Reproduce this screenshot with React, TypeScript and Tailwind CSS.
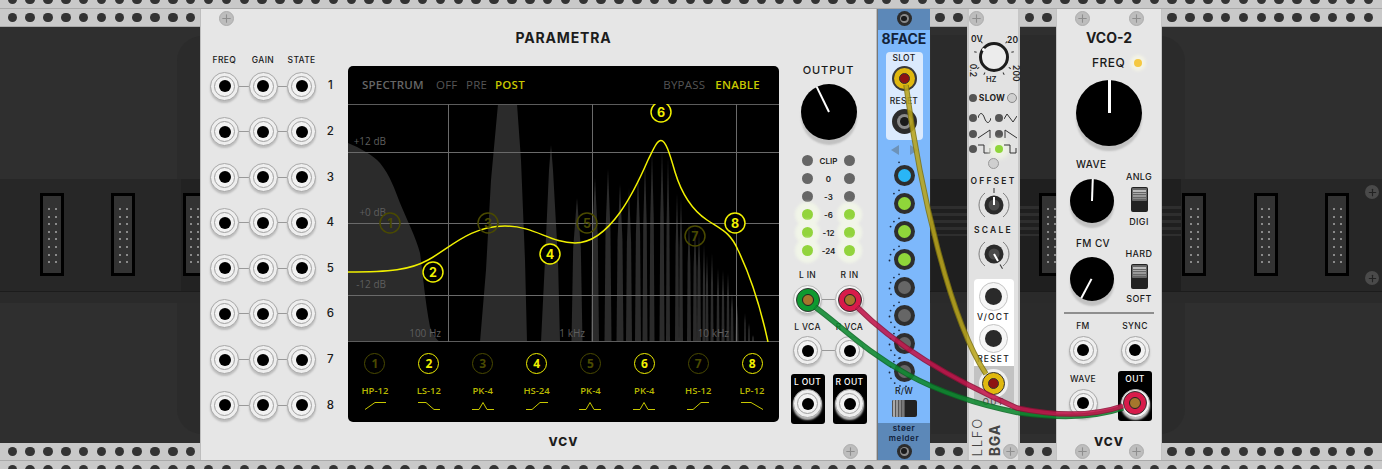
import React from 'react';
import { Plus } from 'lucide-react';

// harmonics of the spectrum: x, top y, half width
const spikes: [number, number, number][] = [
  [577, 198, 5.5], [595, 178, 4], [608, 169, 3.5], [620, 184, 3.5], [629, 188, 3], [638, 175, 3],
  [645, 162, 2.5], [652, 152, 2.5], [662, 150, 2.5], [668, 157, 2], [677, 193, 2], [681, 198, 2], [689, 222, 2],
  [695, 227, 2], [699, 233, 2], [704, 243, 1.5], [707, 255, 1.5], [712, 253, 1.5], [718, 268, 1.5], [723, 270, 1.5],
  [728, 273, 1.5], [732, 293, 1.5], [737, 305, 1.5], [745, 313, 1], [749, 323, 1], [753, 335, 1],
];

const bands = [
  { n: 1, on: false, label: 'HP-12', d: 'M1 8.5 L11 1.5 L22 1.5' },
  { n: 2, on: true, label: 'LS-12', d: 'M0 1.5 L8 1.5 L16 8.5 L22 8.5' },
  { n: 3, on: false, label: 'PK-4', d: 'M0 8.5 L7 8.5 L11 1.5 L15 8.5 L22 8.5' },
  { n: 4, on: true, label: 'HS-24', d: 'M0 8.5 L6 8.5 L14 1.5 L22 1.5' },
  { n: 5, on: false, label: 'PK-4', d: 'M0 8.5 L7 8.5 L11 1.5 L15 8.5 L22 8.5' },
  { n: 6, on: true, label: 'PK-4', d: 'M0 8.5 L7 8.5 L11 1.5 L15 8.5 L22 8.5' },
  { n: 7, on: false, label: 'HS-12', d: 'M0 8.5 L6 8.5 L14 1.5 L22 1.5' },
  { n: 8, on: true, label: 'LP-12', d: 'M0 1.5 L10 1.5 L22 8.5' },
];

const graphNodes = [
  { n: 1, x: 390, y: 223, on: false },
  { n: 2, x: 433, y: 272, on: true },
  { n: 3, x: 488, y: 223, on: false },
  { n: 4, x: 550, y: 254, on: true },
  { n: 5, x: 587, y: 223, on: false },
  { n: 6, x: 661, y: 112, on: true },
  { n: 7, x: 695, y: 236, on: false },
  { n: 8, x: 735, y: 223, on: true },
];

const meter = [
  { label: 'CLIP', on: false },
  { label: '0', on: false },
  { label: '-3', on: false },
  { label: '-6', on: true },
  { label: '-12', on: true },
  { label: '-24', on: true },
];

const eight = ['#29b6f6', '#8fd63a', '#8fd63a', '#8fd63a', '#666', '#666', '#666', '#666'];

function Rail({ className }: { className: string }) {
  return (
    <div className={`flex shrink-0 w-full pl-[7.55px] gap-[8.35px] bg-[#c9c9c9] overflow-hidden ${className}`}>
      {Array.from({ length: 78 }).map((_, i) => (
        <div key={i} className="w-[9.5px] h-[9.5px] shrink-0 rounded-full bg-[#333]" />
      ))}
    </div>
  );
}

function Connector() {
  return (
    <div className="w-[24px] h-[83px] shrink-0 border-[3px] border-black bg-[#333] grid grid-cols-2 content-start justify-items-center px-[2px] pt-[12px] gap-y-[5.6px]">
      {Array.from({ length: 16 }).map((_, i) => (
        <div key={i} className="w-[2px] h-[2px] bg-[#8a8a8a]" />
      ))}
    </div>
  );
}

function Screw({ className }: { className: string }) {
  return (
    <div className={`absolute w-[15px] h-[15px] rounded-full bg-[#bdbdbd] border border-[#adadad] flex items-center justify-center ${className}`}>
      <Plus size={13} strokeWidth={2} color="#8e8e8e" />
    </div>
  );
}

function Jack() {
  return (
    <div className="w-[29px] h-[29px] shrink-0 rounded-full border border-[#a8a8a8] bg-[#eeeeee] shadow-[0_2px_2px_#bcbcbc] flex items-center justify-center">
      <div className="w-[21px] h-[21px] rounded-full border border-[#a0a0a0] bg-[#f2f2f2] flex items-center justify-center">
        <div className="w-[12px] h-[12px] rounded-full bg-black" />
      </div>
    </div>
  );
}

function Plug({ ring, core }: { ring: string; core: string }) {
  return (
    <div className="w-[29px] h-[29px] shrink-0 rounded-full border border-[#b5b5b5] bg-[#f5f5f5] shadow-[0_2px_2px_#c4c4c4] flex items-center justify-center">
      <div className={`w-[24px] h-[24px] rounded-full border border-[#333] flex items-center justify-center ${ring}`}>
        <div className={`w-[12px] h-[12px] rounded-full border border-[#222] ${core}`} />
      </div>
    </div>
  );
}

function Knob({ size, needle }: { size: string; needle: string }) {
  return (
    <div className={`relative shrink-0 rounded-full bg-black shadow-[0_5px_2px_#c2c2c2] ${size}`}>
      <div className={`absolute left-1/2 top-0 bottom-1/2 -ml-px bg-white origin-bottom ${needle}`} />
    </div>
  );
}

function Led({ on }: { on: boolean }) {
  return on ? (
    <div className="w-[11px] h-[11px] shrink-0 rounded-full bg-[#92d43c] shadow-[0_0_3px_7px_#f1f5e8]" />
  ) : (
    <div className="w-[11px] h-[11px] shrink-0 rounded-full bg-[#666]" />
  );
}

function Label({ children, className = '' }: { children: React.ReactNode; className?: string }) {
  return (
    <div className={`h-[10px] flex items-center justify-center text-[8.5px] font-medium tracking-[0.04em] text-[#1a1a1a] whitespace-nowrap ${className}`}>
      {children}
    </div>
  );
}

function Logo() {
  return <div className="text-[12px] leading-[14px] font-extrabold tracking-[0.08em] text-[#1c1c1c] text-center">VCV</div>;
}

function Node({ n, on }: { n: number; on: boolean }) {
  return (
    <div
      className={`w-[21px] h-[21px] rounded-full border-[1.5px] flex items-center justify-center text-[12px] font-bold ${
        on ? 'border-[#f0f000] text-[#f0f000]' : 'border-[#4a4a00] text-[#4a4a00]'
      }`}
    >
      {n}
    </div>
  );
}

function Graph() {
  return (
    <svg viewBox="348 104 431 238" className="w-[431px] h-[238px] block shrink-0">
      <g fill="#2b2b2b">
        <path d="M348 143 C360 148 373 155 380 163 C390 175 395 190 400 203 C408 222 416 238 420 253 C423 275 425 300 430 327 C433 335 437 340 440 342 L348 342 Z" />
        <path d="M480 342 L486 270 L491 180 L498 104 L517 104 L521 160 L525 260 L527 342 Z" />
        <path d="M541 342 L545 260 L549 170 L551 145 L553 170 L558 260 L560 342 Z" />
        {spikes.map(([x, top, w]) => {
          const mid = top + (342 - top) * 0.35;
          return <path key={x} d={`M${x - w} 342 L${x - w * 0.7} ${mid} L${x} ${top} L${x + w * 0.7} ${mid} L${x + w} 342 Z`} />;
        })}
      </g>
      <g stroke="#5c5c5c" strokeWidth="1">
        <line x1="348" x2="779" y1="104.5" y2="104.5" />
        <line x1="348" x2="779" y1="152.5" y2="152.5" stroke="#6a6a6a" />
        <line x1="348" x2="779" y1="223.5" y2="223.5" stroke="#6a6a6a" />
        <line x1="348" x2="779" y1="295.5" y2="295.5" stroke="#6a6a6a" />
        <line x1="348" x2="779" y1="341.5" y2="341.5" />
        <line x1="448.5" x2="448.5" y1="104" y2="342" stroke="#6a6a6a" />
        <line x1="592.5" x2="592.5" y1="104" y2="342" stroke="#6a6a6a" />
        <line x1="736.5" x2="736.5" y1="104" y2="342" stroke="#6a6a6a" />
      </g>
      <g fontFamily="Open Sans, sans-serif" fontSize="10" fill="#5e5e5e" textAnchor="end">
        <text x="386" y="145">+12 dB</text>
        <text x="386" y="216">+0 dB</text>
        <text x="386" y="288">-12 dB</text>
        <text x="441" y="337">100 Hz</text>
        <text x="585" y="337">1 kHz</text>
        <text x="729" y="337">10 kHz</text>
      </g>
      <path
        d="M348 272 C390 272 410 270 428 260 C450 248 470 226 505 226 C535 226 550 243 575 243 C610 243 635 190 648 160 C654 148 657 140.5 661 140.5 C666 140.5 670 155 675 172 C682 195 692 210 707 220 C722 230 730 232 738 250 C750 275 760 305 768 342"
        fill="none"
        stroke="#f0f000"
        strokeWidth="1.5"
      />
      {graphNodes.map((g) => (
        <g key={g.n}>
          <circle cx={g.x} cy={g.y} r="10" fill={g.on ? '#000' : 'none'} stroke={g.on ? '#f0f000' : '#4a4a00'} strokeWidth="1.5" />
          <text x={g.x} y={g.y + 4.5} textAnchor="middle" fontFamily="Inter, sans-serif" fontSize="12.5" fontWeight="700" fill={g.on ? '#f0f000' : '#4a4a00'}>
            {g.n}
          </text>
        </g>
      ))}
    </svg>
  );
}

function Parametra() {
  return (
    <section className="relative w-[677px] h-full shrink-0 flex bg-[#e6e6e6] border-x border-[#bdbdbd]">
      <Screw className="left-[18px] top-[1.5px]" />
      <Screw className="right-[18px] bottom-[1.5px]" />

      {/* cv jacks */}
      <div className="w-[147px] shrink-0 pt-[46px]">
        <div className="flex pl-[4px] mb-[6.5px]">
          {['FREQ', 'GAIN', 'STATE'].map((t) => (
            <Label key={t} className="w-[38.65px]">{t}</Label>
          ))}
        </div>
        <div className="flex flex-col gap-[16.6px] pl-[9px]">
          {[1, 2, 3, 4, 5, 6, 7, 8].map((n) => (
            <div key={n} className="flex items-center">
              <Jack />
              <div className="w-[9.65px] h-px bg-[#999]" />
              <Jack />
              <div className="w-[9.65px] h-px bg-[#999]" />
              <Jack />
              <div className="ml-[7px] w-[14px] text-center text-[11.5px] font-medium text-[#1a1a1a]">{n}</div>
            </div>
          ))}
        </div>
      </div>

      {/* display */}
      <div className="w-[431px] shrink-0 flex flex-col">
        <div className="h-[57px] pb-px flex items-center justify-center text-[14px] font-bold tracking-[0.06em] text-[#1c1c1c]">PARAMETRA</div>
        <div className="h-[356px] rounded-[5px] bg-black overflow-hidden flex flex-col font-['Open_Sans',sans-serif]">
          <div className="h-[38px] shrink-0 flex items-center px-[14px] text-[11.5px] tracking-[0.02em] text-[#555]">
            <span className="w-[61px] font-semibold text-[#666] whitespace-nowrap">SPECTRUM</span>
            <span className="ml-[13px] w-[21px]">OFF</span>
            <span className="ml-[9px] w-[21px]">PRE</span>
            <span className="ml-[8px] font-semibold text-[#c8c800]">POST</span>
            <span className="ml-auto">BYPASS</span>
            <span className="ml-[10px] mr-[5px] font-semibold text-[#c8c800]">ENABLE</span>
          </div>
          <Graph />
          <div className="flex-1 grid grid-cols-8 pt-[11px]">
            {bands.map((b) => (
              <div key={b.n} className="flex flex-col items-center">
                <Node n={b.n} on={b.on} />
                <div className="mt-[10px] h-[14px] leading-[14px] text-[9.5px] font-semibold text-[#b8b800]">{b.label}</div>
                <svg width="22" height="10" viewBox="0 0 22 10" className="mt-[3px]">
                  <path d={b.d} fill="none" stroke="#c8c800" strokeWidth="1" />
                </svg>
              </div>
            ))}
          </div>
        </div>
        <div className="mt-[13px]">
          <Logo />
        </div>
      </div>

      {/* output */}
      <div className="w-[97px] shrink-0 pl-[2px] pt-[55px] flex flex-col items-center">
        <div className="h-[12px] flex items-center text-[11px] font-medium tracking-[0.08em] text-[#1a1a1a]">OUTPUT</div>
        <div className="mt-[8px]">
          <Knob size="w-[56px] h-[56px]" needle="w-[2px] rotate-[-26deg]" />
        </div>
        <div className="mt-[11.7px] w-[53px] flex flex-col">
          {meter.map((m) => (
            <div key={m.label} className="h-[18px] flex items-center">
              <Led on={m.on} />
              <div className="relative flex-1 text-center text-[8px] font-semibold text-[#222]">{m.label}</div>
              <Led on={m.on} />
            </div>
          ))}
        </div>
        <div className="mt-[11px] w-[84px] grid grid-cols-2">
          <Label>L IN</Label>
          <Label>R IN</Label>
        </div>
        <div className="mt-[4.8px] flex items-center">
          <Plug ring="bg-[#0f9a30]" core="bg-[#a6762c]" />
          <div className="w-[13px] h-px bg-[#999]" />
          <Plug ring="bg-[#d81b4a]" core="bg-[#a6762c]" />
        </div>
        <div className="mt-[7.5px] w-[84px] grid grid-cols-2">
          <Label>L VCA</Label>
          <Label>R VCA</Label>
        </div>
        <div className="mt-[4.5px] flex items-center">
          <Jack />
          <div className="w-[13px] h-px bg-[#999]" />
          <Jack />
        </div>
        <div className="mt-[8.5px] flex gap-[8px]">
          {['L OUT', 'R OUT'].map((t) => (
            <div key={t} className="w-[34px] h-[50px] rounded-[3px] bg-black flex flex-col items-center pt-[3px] gap-[2.5px]">
              <Label className="text-white">{t}</Label>
              <Jack />
            </div>
          ))}
        </div>
      </div>
    </section>
  );
}

function DarkJack({ size }: { size: string }) {
  return (
    <div className={`shrink-0 rounded-full bg-[#2c2c2c] flex items-center justify-center ${size}`}>
      <div className="w-[60%] h-[60%] rounded-full bg-[#8a8a8a] flex items-center justify-center">
        <div className="w-[60%] h-[60%] rounded-full bg-[#1a1a1a]" />
      </div>
    </div>
  );
}

function SlotButton({ color, index }: { color: string; index: number }) {
  return (
    <div className="relative w-[21px] h-[21px] shrink-0 rounded-full bg-[#2e2e2e] flex items-center justify-center">
      <div className="w-[13px] h-[13px] rounded-full" style={{ backgroundColor: color }} />
      <svg viewBox="-16 -16 32 32" className="absolute -left-[5.5px] -top-[5.5px] w-[32px] h-[32px]">
        {Array.from({ length: index + 1 }).map((_, i) => {
          const a = ((-20 - i * 24) * Math.PI) / 180;
          return <circle key={i} cx={Math.sin(a) * 14.5} cy={-Math.cos(a) * 14.5} r="0.9" fill="#1c2c44" />;
        })}
      </svg>
    </div>
  );
}

function EightFace() {
  return (
    <section className="w-[53px] h-full shrink-0 flex flex-col items-center bg-[#7db8fb] border-l border-[#777]">
      <div className="w-full h-[21px] shrink-0 bg-[#5c88b8] flex justify-center pt-[2px]">
        <DarkJack size="w-[15px] h-[15px]" />
      </div>
      <div className="h-[22px] pb-[6px] shrink-0 flex items-center text-[14px] font-bold text-[#14233a]">8FACE</div>
      <div className="w-[37px] h-[88px] shrink-0 rounded-[4px] bg-[#dbeafd] flex flex-col items-center pt-[1px]">
        <Label className="text-[7px]">SLOT</Label>
        <div className="mt-[3px] w-[25px] h-[25px] rounded-full bg-[#3a3a3a] flex items-center justify-center">
          <div className="w-[21px] h-[21px] rounded-full bg-[#e0b80f] flex items-center justify-center">
            <div className="w-[11px] h-[11px] rounded-full border border-[#333] bg-[#8e1212]" />
          </div>
        </div>
        <Label className="mt-[5px] text-[7px]">RESET</Label>
        <div className="mt-[3px]">
          <DarkJack size="w-[25px] h-[25px]" />
        </div>
      </div>
      <div className="mt-[4px] h-[11px] flex items-center gap-[11px]">
        <div className="w-0 h-0 border-y-[5px] border-y-transparent border-r-[8px] border-r-[#6d92b8]" />
        <div className="w-0 h-0 border-y-[5px] border-y-transparent border-l-[8px] border-l-[#6d92b8]" />
      </div>
      <div className="mt-[10px] flex flex-col gap-[7px]">
        {eight.map((c, i) => (
          <SlotButton key={i} color={c} index={i} />
        ))}
      </div>
      <Label className="mt-[4.5px] text-[7.5px]">R/W</Label>
      <div className="mt-[3px] w-[25px] h-[17px] shrink-0 rounded-[2px] bg-[#222] flex overflow-hidden">
        <div className="w-[13px] flex gap-px bg-[#555] px-px">
          <div className="w-[2px] bg-[#aaa]" />
          <div className="w-[2px] bg-[#999]" />
          <div className="w-[2px] bg-[#888]" />
          <div className="w-[2px] bg-[#777]" />
        </div>
      </div>
      <div className="mt-auto w-full h-[37px] bg-[#5c88b8] flex flex-col items-center">
        <div className="h-[10px] text-[8px] leading-[10px] font-semibold tracking-[0.07em] text-[#10203a]">støer</div>
        <div className="h-[10px] text-[8px] leading-[10px] font-semibold tracking-[0.07em] text-[#10203a]">melder</div>
        <div className="mt-[0.5px]">
          <DarkJack size="w-[15px] h-[15px]" />
        </div>
      </div>
    </section>
  );
}

function Wave({ d }: { d: string }) {
  return (
    <svg width="13" height="12" viewBox="0 0 13 12" className="shrink-0">
      <path d={d} fill="none" stroke="#333" strokeWidth="1" />
    </svg>
  );
}

function TinyLed({ green = false }: { green?: boolean }) {
  return green ? (
    <div className="w-[8px] h-[8px] shrink-0 rounded-full bg-[#8fd63a] shadow-[0_0_4px_6px_#eef2e4]" />
  ) : (
    <div className="w-[8px] h-[8px] shrink-0 rounded-full bg-[#555]" />
  );
}

function SmallKnob({ angle }: { angle: string }) {
  return (
    <svg width="36" height="36" viewBox="-18 -18 36 36" className="shrink-0">
      <path d="M-9 -12 A15 15 0 0 0 -9 12" fill="none" stroke="#666" strokeWidth="0.8" />
      <path d="M9 -12 A15 15 0 0 1 9 12" fill="none" stroke="#666" strokeWidth="0.8" />
      <circle r="9.5" fill="#2a2a2a" />
      <circle r="5.5" fill="#4a4a4a" />
      <g className={angle}>
        <line x1="0" y1="-17" x2="0" y2="-12" stroke="#333" strokeWidth="1" />
        <line x1="0" y1="-8" x2="0" y2="0" stroke="#fff" strokeWidth="2" />
      </g>
    </svg>
  );
}

function LightJack() {
  return (
    <div className="w-[29px] h-[29px] shrink-0 rounded-full border border-[#c4c4c4] bg-[#f6f6f6] flex items-center justify-center">
      <div className="w-[17px] h-[17px] rounded-full bg-[#2a2a2a]" />
    </div>
  );
}

function Lfo() {
  return (
    <section className="relative w-[53px] h-full shrink-0 flex flex-col items-center bg-[#e2e2e2] border-x-2 border-[#c6c6c6]">
      <Screw className="left-[0px] top-[1.5px]" />
      <Screw className="right-[0px] bottom-[1.5px]" />

      <div className="relative w-full h-[63px] mt-[21px] shrink-0 flex justify-center pt-[12px] text-[8.5px] font-semibold text-[#222]">
        <svg viewBox="-24 -24 48 48" className="absolute left-[0.5px] top-[3px] w-[48px] h-[48px]">
          {[-125, -75, -40, 40, 75, 125, -150, 150].map((a) => (
            <line key={a} x1="0" y1="-18" x2="0" y2="-20.5" stroke="#333" strokeWidth="1" transform={`rotate(${a})`} />
          ))}
        </svg>
        <div className="relative w-[30px] h-[30px] rounded-full border-[3px] border-[#1c1c1c] bg-[#ececec]">
          <div className="absolute left-[0px] top-[3px] w-[3px] h-[3px] rounded-full bg-white" />
        </div>
        <span className="absolute left-[2px] top-[3px]">0V</span>
        <span className="absolute right-[0px] top-[4px]">20</span>
        <span className="absolute left-[-3px] top-[34px] rotate-90">0.2</span>
        <span className="absolute right-[-6px] top-[37px] rotate-90">200</span>
        <span className="absolute left-[17px] top-[44px] text-[7.5px]">HZ</span>
      </div>

      <div className="h-[10px] w-full flex items-center justify-between pr-px shrink-0">
        <TinyLed />
        <span className="text-[8.5px] font-bold tracking-[0.03em] text-[#222]">SLOW</span>
        <div className="w-[10px] h-[10px] rounded-full bg-[#d0d0d0] border border-[#888]" />
      </div>

      <div className="mt-[9px] flex flex-col gap-[3.5px] w-full">
        <div className="h-[12px] flex items-center gap-[4px]">
          <div className="flex items-center gap-px"><TinyLed /><Wave d="M0 6 C1.5 0 4.5 0 6.5 6 C8.5 12 11.5 12 13 6" /></div>
          <div className="flex items-center gap-px"><TinyLed /><Wave d="M0 7 L3 2 L9 10 L13 4" /></div>
        </div>
        <div className="h-[12px] flex items-center gap-[4px]">
          <div className="flex items-center gap-px"><TinyLed /><Wave d="M0 10 L12 2 L12 10" /></div>
          <div className="flex items-center gap-px"><TinyLed /><Wave d="M1 10 L1 2 L13 10" /></div>
        </div>
        <div className="h-[12px] flex items-center gap-[4px]">
          <div className="flex items-center gap-px"><TinyLed /><Wave d="M0 2 L6 2 L6 10 L12 10 L12 5" /></div>
          <div className="flex items-center gap-px"><TinyLed green /><Wave d="M0 2 L6 2 L6 10 L12 10 L12 5" /></div>
        </div>
      </div>

      <div className="mt-[3px] w-[11px] h-[11px] shrink-0 rounded-full bg-[#cfcfcf] border border-[#999]" />
      <div className="relative mt-[7px] h-[10px] flex items-center text-[8.5px] font-semibold tracking-[0.26em] text-[#222]">OFFSET</div>
      <div className="mt-px"><SmallKnob angle="" /></div>
      <div className="mt-[2px] h-[10px] flex items-center text-[8.5px] font-semibold tracking-[0.26em] text-[#222]">SCALE</div>
      <div className="mt-px"><SmallKnob angle="rotate-[150deg]" /></div>

      <div className="mt-[7px] w-[40px] h-[87px] shrink-0 rounded-t-[4px] bg-white flex flex-col items-center pt-[2.5px]">
        <LightJack />
        <Label className="mt-[1.5px] text-[7.5px] tracking-[0.14em]">V/OCT</Label>
        <div className="mt-[1.5px]"><LightJack /></div>
        <Label className="mt-[1.5px] text-[7.5px] tracking-[0.14em]">RESET</Label>
      </div>
      <div className="w-[40px] h-[38px] shrink-0 bg-[#c2c2c2] flex flex-col items-center pt-[2.5px]">
        <div className="w-[29px] h-[29px] shrink-0 rounded-full bg-[#f0f0f0] flex items-center justify-center">
          <div className="w-[23px] h-[23px] rounded-full border border-[#333] bg-[#e0b80f] flex items-center justify-center">
            <div className="w-[11px] h-[11px] rounded-full border border-[#333] bg-[#8e1212]" />
          </div>
        </div>
        <Label className="text-[7.5px] text-[#555] tracking-[0.14em]">OUT</Label>
      </div>

      <div className="flex-1 w-full flex items-end pb-[4px] pl-[1px] gap-[4px] text-[#444]">
        <span className="[writing-mode:vertical-rl] rotate-180 text-[13px] leading-[14px] font-light tracking-[0.14em]">LLFO</span>
        <span className="[writing-mode:vertical-rl] rotate-180 text-[14px] leading-[14px] font-bold tracking-[0.06em]">BGA</span>
      </div>
    </section>
  );
}

function SwitchV() {
  return (
    <div className="w-[17px] h-[25px] rounded-[2px] bg-[#222] flex flex-col justify-start p-px">
      <div className="h-[13px] rounded-[1px] bg-[#666] flex flex-col justify-center gap-px px-px">
        <div className="h-[1.5px] bg-[#bbb]" />
        <div className="h-[1.5px] bg-[#aaa]" />
        <div className="h-[1.5px] bg-[#999]" />
        <div className="h-[1.5px] bg-[#888]" />
      </div>
    </div>
  );
}

function Vco() {
  return (
    <section className="relative w-[106px] h-full shrink-0 flex flex-col bg-[#e6e6e6] border-x border-[#c4c4c4]">
      <Screw className="left-[18px] top-[1.5px]" />
      <Screw className="right-[17px] top-[1.5px]" />
      <Screw className="left-[18px] bottom-[1.5px]" />
      <Screw className="right-[17px] bottom-[1.5px]" />

      <div className="mt-[18px] h-[20px] flex items-center justify-center text-[14px] font-bold text-[#1c1c1c]">VCO-2</div>
      <div className="mt-[9px] h-[14px] flex items-center pl-[35px] text-[12px] font-medium tracking-[0.04em] text-[#1a1a1a]">
        FREQ
        <div className="ml-[9px] w-[8px] h-[8px] rounded-full bg-[#f5c842] shadow-[0_0_3px_4px_#f3f3e6]" />
      </div>
      <div className="mt-[10px] flex justify-center">
        <Knob size="w-[66px] h-[66px]" needle="w-[2.5px]" />
      </div>

      <div className="mt-[13px] h-[145px] flex shrink-0">
        <div className="w-[67px] shrink-0 pl-[13px]">
          <Label className="justify-start pl-[6px] text-[10px]">WAVE</Label>
          <div className="mt-[10px]">
            <Knob size="w-[44px] h-[44px]" needle="w-[1.5px] rotate-[2deg]" />
          </div>
          <Label className="mt-[15px] justify-start pl-[6px] text-[10px]">FM CV</Label>
          <div className="mt-[9px]">
            <Knob size="w-[44px] h-[44px]" needle="w-[1.5px] rotate-[208deg]" />
          </div>
        </div>
        <div className="w-[30px] shrink-0 flex flex-col items-center pt-[13px]">
          <Label className="text-[9px]">ANLG</Label>
          <div className="mt-[5px]"><SwitchV /></div>
          <Label className="mt-[5px] text-[9px]">DIGI</Label>
          <Label className="mt-[22px] text-[9px]">HARD</Label>
          <div className="mt-[5px]"><SwitchV /></div>
          <Label className="mt-[5px] text-[9px]">SOFT</Label>
        </div>
      </div>

      <div className="mt-[8px] mx-[7px] h-[2px] bg-[#8e8e8e]" />

      <div className="mt-[7px] grid grid-cols-2">
        <div className="flex flex-col items-center">
          <Label>FM</Label>
          <div className="mt-[4.5px]"><Jack /></div>
          <Label className="mt-[9.5px]">WAVE</Label>
          <div className="mt-[4.5px]"><Jack /></div>
        </div>
        <div className="flex flex-col items-center">
          <Label>SYNC</Label>
          <div className="mt-[4.5px]"><Jack /></div>
          <div className="mt-[6.5px] w-[34px] h-[50px] rounded-[3px] bg-black flex flex-col items-center pt-[3px] gap-[4.5px]">
            <Label className="text-white">OUT</Label>
            <Plug ring="bg-[#d81b4a]" core="bg-[#a6762c]" />
          </div>
        </div>
      </div>

      <div className="mt-[14px]">
        <Logo />
      </div>
    </section>
  );
}

function Cable({ d, edge, color }: { d: string; edge: string; color: string }) {
  return (
    <g opacity="0.88">
      <path d={d} stroke={edge} strokeWidth="5.5" />
      <path d={d} stroke={color} strokeWidth="3.5" />
    </g>
  );
}

export default function App() {
  return (
    <div className="relative w-[1382px] h-[469px] overflow-hidden bg-[#2f2f2f] flex flex-col font-[Inter,sans-serif]">
      {/* rack */}
      <Rail className="h-[9px] items-end pb-[4px] border-b border-[#aaa]" />
      <Rail className="h-[18px] items-center border-b border-[#aaa]" />
      <div className="relative h-[152px] shrink-0">
        <div className="absolute left-[177px] top-[9px] bottom-0 w-[30px] rounded-tl-[25px] bg-[#2b2b2b]" />
        <div className="absolute left-[1155px] top-[9px] bottom-0 w-[30px] rounded-tr-[25px] bg-[#2b2b2b]" />
        <div className="absolute left-[931px] top-[8px] bottom-0 w-[125px] bg-[#2b2b2b]" />
      </div>
      <div className="relative h-[113px] shrink-0 bg-[#272727] flex gap-[47.4px] pl-[40px] pt-[14px] border-b border-[#1c1c1c]">
        <div className="absolute left-[181px] top-0 bottom-0 w-[20px] bg-[#222]" />
        <div className="absolute left-[931px] top-0 bottom-0 w-[250px] bg-[#1f1f1f]">
          <div className="mt-[27px] h-[30px] bg-[repeating-linear-gradient(to_bottom,#2e2e2e_0px,#2e2e2e_3px,#1f1f1f_3px,#1f1f1f_7px)]" />
        </div>
        {Array.from({ length: 19 }).map((_, i) => (
          <div key={i} className="relative"><Connector /></div>
        ))}
        <div className="absolute left-[1365px] top-[6px] w-[14px] h-[14px] rounded-full bg-[#4a4a4a] flex items-center justify-center">
          <Plus size={11} strokeWidth={2.5} color="#222" />
        </div>
        <div className="absolute left-[1365px] top-[92px] w-[14px] h-[14px] rounded-full bg-[#4a4a4a] flex items-center justify-center">
          <Plus size={11} strokeWidth={2.5} color="#222" />
        </div>
      </div>
      <div className="h-[11px] shrink-0 bg-[#2a2a2a]" />
      <div className="relative h-[140px] shrink-0">
        <div className="absolute left-[177px] top-0 bottom-[9px] w-[30px] rounded-bl-[25px] bg-[#2b2b2b]" />
        <div className="absolute left-[1155px] top-0 bottom-[9px] w-[30px] rounded-br-[25px] bg-[#2b2b2b]" />
        <div className="absolute left-[931px] top-0 bottom-[9px] w-[125px] bg-[#2b2b2b]" />
      </div>
      <Rail className="h-[18px] items-center border-b border-[#aaa]" />
      <Rail className="flex-1 items-start pt-[4px]" />

      {/* modules */}
      <div className="absolute left-0 top-[9px] h-[451px] flex pl-[200px]">
        <Parametra />
        <EightFace />
        <div className="w-[37px] shrink-0" />
        <Lfo />
        <div className="w-[36px] shrink-0" />
        <Vco />
      </div>

      {/* cables */}
      <svg viewBox="0 0 1382 469" className="absolute inset-0 w-[1382px] h-[469px] pointer-events-none" fill="none">
        <Cable d="M906 85 C920 190 950 320 986 374" edge="#7f7410" color="#b9a51d" />
        <Cable d="M815 307 C860 340 900 390 1020 413 C1070 420 1100 416 1123 408" edge="#0a6a24" color="#0e8a30" />
        <Cable d="M857 307 C885 335 930 370 1017 408 C1065 418 1100 414 1123 406" edge="#8f1238" color="#c3164c" />
      </svg>
    </div>
  );
}
